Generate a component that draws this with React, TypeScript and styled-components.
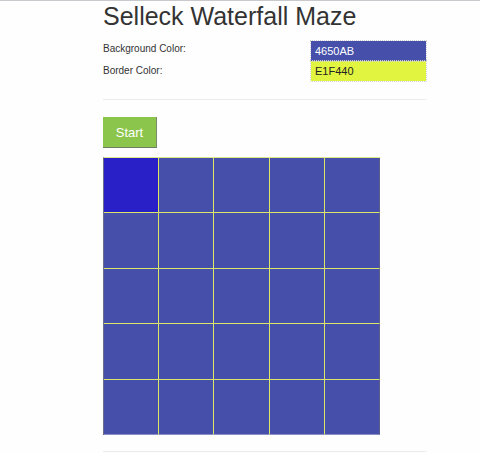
import styled, { createGlobalStyle } from "styled-components";

const GlobalStyle = createGlobalStyle`
  html, body {
    margin: 0;
    padding: 0;
    background: #fefefe;
    font-family: "Liberation Sans", Arial, sans-serif;
    color: #333;
  }
  body {
    border-top: 1px solid #c9c8cd;
  }
`;

const Page = styled.div`
  width: 323px;
  margin: 0 auto 0 103px;
`;

const Title = styled.h1`
  margin: 0;
  font-size: 25px;
  font-weight: normal;
  line-height: 30px;
  color: #333;
`;

const Settings = styled.div`
  display: grid;
  grid-template-columns: 1fr 115px;
  margin-top: 10px;
`;

const Labels = styled.div`
  display: flex;
  flex-direction: column;
  gap: 11px;
  padding-top: 2px;
`;

const Label = styled.div`
  font-size: 10px;
  line-height: 11px;
  color: #333;
`;

const ColorInput = styled.div<{ $bg: string; $fg: string }>`
  height: 20px;
  box-sizing: border-box;
  padding: 0 4px;
  display: flex;
  align-items: center;
  font-size: 11px;
  background: ${(p) => p.$bg};
  color: ${(p) => p.$fg};
  outline: 1px dotted #cfcfd6;
`;

const Rule = styled.hr`
  border: 0;
  border-top: 1px solid #ebebeb;
  margin: 18px 0 0;
`;

const StartButton = styled.button.attrs({ type: "button" })`
  all: unset;
  display: flex;
  align-items: center;
  justify-content: center;
  margin-top: 17px;
  width: 54px;
  height: 31px;
  box-sizing: border-box;
  background: #8cc54b;
  color: #fff;
  font-size: 13px;
  border-right: 1px solid #7a8c6a;
  border-bottom: 1px solid #6f7d63;
`;

const Board = styled.div`
  margin-top: 9px;
  width: 277px;
  height: 278px;
  display: grid;
  grid-template-columns: repeat(5, 1fr);
  grid-template-rows: repeat(5, 1fr);
  box-sizing: border-box;
  border-top: 1px solid #dfe98a;
  border-left: 1px solid #6b6e8a;
`;

const Cell = styled.div<{ $active: boolean }>`
  background: ${(p) => (p.$active ? "#2a20c8" : "#4650ab")};
  border-right: 1px solid #d9e66a;
  border-bottom: 1px solid #d9e66a;
  &:nth-child(5n) {
    border-right-color: #5b5e8c;
  }
  &:nth-child(n + 21) {
    border-bottom-color: #8c8fc4;
  }
`;

const BottomRule = styled(Rule)`
  margin-top: 16px;
`;

export default function App() {
  const cells = Array.from({ length: 25 }, (_, i) => i);
  return (
    <>
      <GlobalStyle />
      <Page>
        <Title>Selleck Waterfall Maze</Title>
        <Settings>
          <Labels>
            <Label>Background Color:</Label>
            <Label>Border Color:</Label>
          </Labels>
          <div>
            <ColorInput $bg="#4650AB" $fg="#fff">4650AB</ColorInput>
            <ColorInput $bg="#E1F440" $fg="#222">E1F440</ColorInput>
          </div>
        </Settings>
        <Rule />
        <StartButton>Start</StartButton>
        <Board>
          {cells.map((i) => (
            <Cell key={i} $active={i === 0} />
          ))}
        </Board>
        <BottomRule />
      </Page>
    </>
  );
}
